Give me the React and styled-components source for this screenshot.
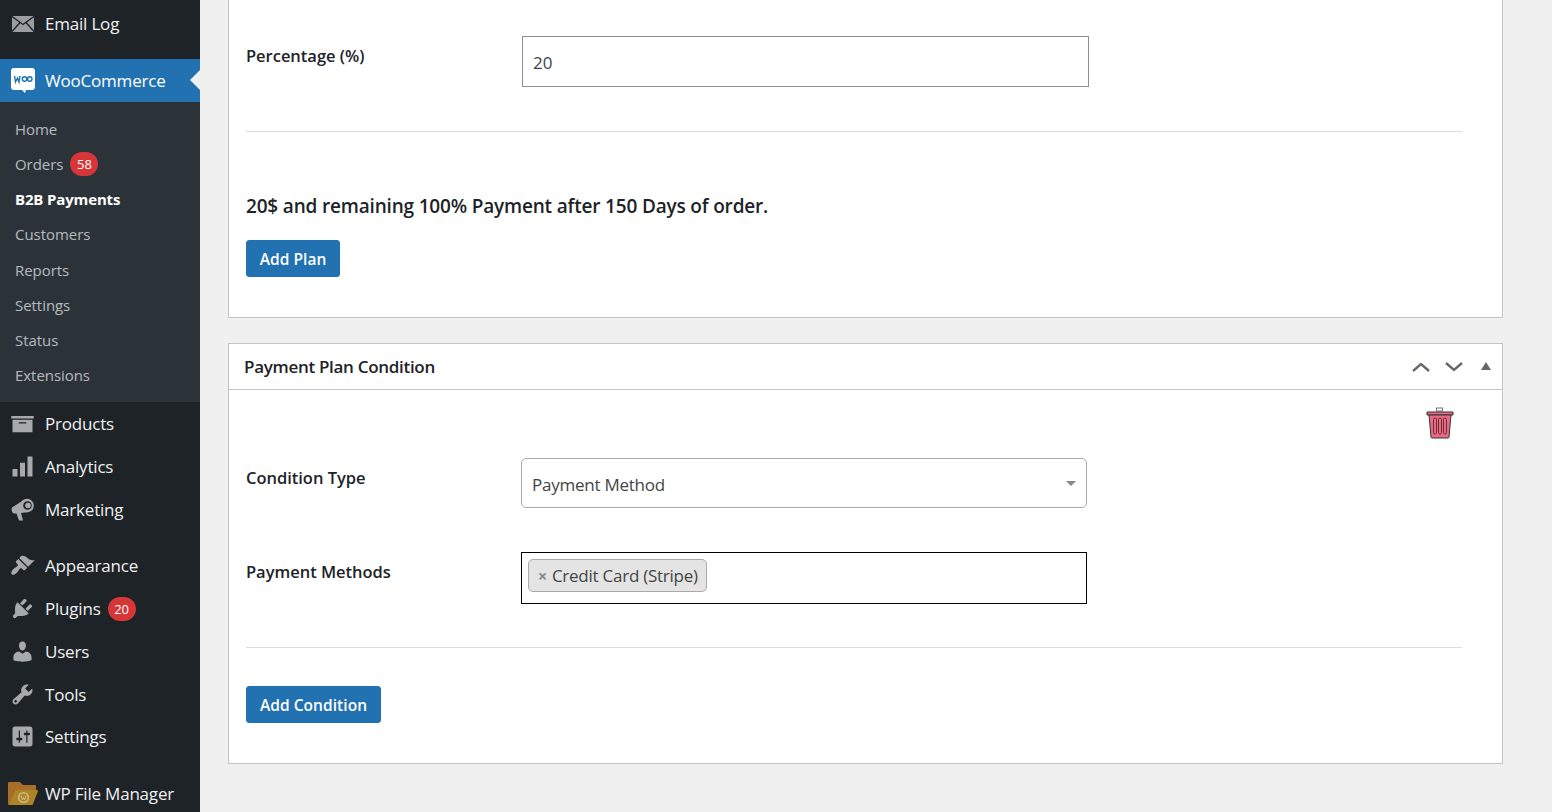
import React from "react";
import styled, { createGlobalStyle } from "styled-components";

const Global = createGlobalStyle`
  html, body { margin: 0; padding: 0; height: 812px; overflow: hidden; background: #f0f0f1; }
  body { font-family: "Open Sans", "Noto Sans", "Liberation Sans", sans-serif; color: #1d2327; }
  * { box-sizing: border-box; }
`;

const Page = styled.div`
  display: flex;
  width: 1552px;
  height: 812px;
  overflow: hidden;
`;

const Sidebar = styled.nav`
  width: 200px;
  flex: none;
  height: 812px;
  background: #1d2327;
  display: flex;
  flex-direction: column;
  padding-top: 2px;
  overflow: hidden;
`;

const MenuRow = styled.div`
  height: ${(p) => p.$h || 43}px;
  flex: none;
  display: flex;
  align-items: center;
  color: #f0f0f1;
  font-size: 17px;
  letter-spacing: -0.2px;
  position: relative;
  margin-top: ${(p) => p.$gap || 0}px;
  background: ${(p) => (p.$active ? "#2271b1" : "transparent")};
  ${(p) => p.$active && "color:#fff;"}
`;

const IconSlot = styled.span`
  width: 45px;
  flex: none;
  display: flex;
  justify-content: center;
  svg { display: block; }
`;

const Notch = styled.span`
  position: absolute;
  right: 0;
  top: 11px;
  width: 0;
  height: 0;
  border: 10px solid transparent;
  border-left: 0;
  border-right-color: #f0f0f1;
`;

const SubMenu = styled.div`
  background: #2c3338;
  height: 300px;
  flex: none;
  padding: 9.2px 0;
`;

const SubItem = styled.div`
  height: 35.2px;
  display: flex;
  align-items: center;
  padding-left: 15px;
  font-size: 15px;
  letter-spacing: -0.05px;
  color: ${(p) => (p.$current ? "#fff" : "rgba(240,246,252,.7)")};
  font-weight: ${(p) => (p.$current ? 700 : 400)};
  ${(p) => p.$current && "letter-spacing: -0.15px;"}
`;

const Count = styled.span`
  display: inline-flex;
  align-items: center;
  justify-content: center;
  min-width: 28px;
  height: 24px;
  padding: 0 6px;
  margin-left: 7px;
  border-radius: 12px;
  background: #d63638;
  color: #fff;
  font-size: 13px;
  letter-spacing: 0;
`;

const Content = styled.main`
  flex: 1;
  padding: 0 49px 0 28px;
  display: flex;
  flex-direction: column;
  gap: 25px;
`;

const Panel = styled.section`
  background: #fff;
  border: 1px solid #c3c4c7;
  ${(p) => p.$cutTop && "border-top: 0;"}
  height: ${(p) => p.$h}px;
  flex: none;
`;

const PanelHead = styled.header`
  height: 46px;
  border-bottom: 1px solid #c3c4c7;
  display: flex;
  align-items: center;
  justify-content: space-between;
  padding: 0 11px 0 15px;
  font-size: 17px;
  font-weight: 600;
  letter-spacing: -0.3px;
`;

const HeadTitle = styled.h2`
  font: inherit;
  margin: 0;
`;

const HeadControls = styled.div`
  display: flex;
  align-items: center;
  gap: 13px;
`;

const Body = styled.div`
  padding: ${(p) => p.$pad || "0"};
  margin-left: 17px;
  width: 1216px;
`;

const FieldRow = styled.div`
  display: flex;
  align-items: flex-start;
  margin-bottom: ${(p) => p.$mb || 0}px;
`;

const Label = styled.label`
  flex: none;
  width: ${(p) => p.$w || 276}px;
  padding-top: 8px;
  font-size: 16.5px;
  line-height: 24px;
  font-weight: 600;
  letter-spacing: -0.02px;
`;

const TextInput = styled.div`
  width: 567px;
  height: 51px;
  border: 1px solid #8c8f94;
  display: flex;
  align-items: center;
  padding: 2px 10px 0;
  font-size: 17px;
  color: #3c434a;
`;

const SelectBox = styled.div`
  width: 566px;
  height: 50px;
  border: 1px solid #aaa;
  border-radius: 5px;
  display: flex;
  align-items: center;
  padding: 2px 10px 0;
  font-size: 17px;
  letter-spacing: -0.25px;
  color: #444;
  position: relative;
`;

const Caret = styled.span`
  position: absolute;
  right: 10px;
  top: 22px;
  width: 0;
  height: 0;
  border: 5px solid transparent;
  border-top: 5px solid #888;
  border-bottom: 0;
`;

const MultiBox = styled.div`
  width: 566px;
  height: 52px;
  border: 1px solid #000;
  display: flex;
  align-items: flex-start;
  padding: 6px;
`;

const Tag = styled.span`
  height: 33px;
  background: #e4e4e4;
  border: 1px solid #aaa;
  border-radius: 5px;
  display: inline-flex;
  align-items: center;
  padding: 0 8px 0 9px;
  font-size: 17px;
  letter-spacing: -0.25px;
  color: #444;
`;

const TagX = styled.span`
  color: #888;
  font-weight: 700;
  font-size: 16px;
  margin-right: 5px;
`;

const Rule = styled.hr`
  border: 0;
  border-top: 1px solid #dcdcde;
  margin: ${(p) => p.$m};
`;

const Sentence = styled.p`
  margin: ${(p) => p.$m};
  font-size: 19px;
  line-height: 26px;
  font-weight: 600;
  letter-spacing: -0.18px;
`;

const Button = styled.button`
  display: block;
  width: ${(p) => p.$w}px;
  height: 37px;
  padding: 0;
  margin-top: ${(p) => p.$mt || 0}px;
  background: #2271b1;
  color: #fff;
  border: 1px solid #2271b1;
  border-radius: 3px;
  font: 600 15.5px "Open Sans", "Noto Sans", sans-serif;
  letter-spacing: 0.05px;
`;

const TrashRow = styled.div`
  display: flex;
  justify-content: flex-end;
  padding: 17px 8px 0 0;
  height: 68px;
`;

const G = "#a7aaad";

const Dash = ({ d }) => (
  <svg width="25" height="25" viewBox="0 0 20 20">
    <path d={d} fill={G} />
  </svg>
);

const Mail = () => (
  <svg width="22" height="16" viewBox="0 0 22 16">
    <rect width="22" height="16" fill="#9a9da1" />
    <path d="M0 .5 11 8.500 22 .5M0 15.500 8 6.500M22 15.500 14 6.500" stroke="#1d2327" strokeWidth="1.400" fill="none" />
  </svg>
);
const Woo = () => (
  <svg width="24" height="25" viewBox="0 0 24 25">
    <path d="M3 0h18a3 3 0 0 1 3 3v16a3 3 0 0 1-3 3h-6l-1 3-3-3H3a3 3 0 0 1-3-3V3a3 3 0 0 1 3-3z" fill="#fff" />
    <path d="M3.500 8l1 6 2-4 1.500 4 1-6" stroke="#2271b1" strokeWidth="1.400" fill="none" />
    <circle cx="13.500" cy="11" r="2.200" stroke="#2271b1" strokeWidth="1.400" fill="none" />
    <circle cx="18.800" cy="11" r="2.200" stroke="#2271b1" strokeWidth="1.400" fill="none" />
  </svg>
);
const Megaphone = () => (
  <svg width="23" height="23" viewBox="0 0 23 23">
    <path d="M1 9.500 12 2.500 18 14l-8 1 2 7.500H8L5.500 15.500H3c-2-.5-3-4.500-2-6z" fill={G} />
    <circle cx="16" cy="7.500" r="6.800" fill={G} />
    <circle cx="16.500" cy="7.500" r="4.300" fill="#1d2327" />
    <circle cx="17" cy="7.500" r="2.800" fill={G} />
  </svg>
);
const Folder = () => (
  <svg width="30" height="23" viewBox="0 0 30 23">
    <path d="M0 1a1 1 0 0 1 1-1h11l3 3h12a1 1 0 0 1 1 1v4H7L2 23H1a1 1 0 0 1-1-1z" fill="#a96e27" />
    <path d="M7 8h22a1 1 0 0 1 1 1l-5 13a1 1 0 0 1-1 1H1z" fill="#ad8527" />
    <circle cx="15.500" cy="15.500" r="4.800" fill="none" stroke="#cdb988" strokeWidth="1.600" />
    <path d="M13 13.500l1.500 4.500 1-3 1 3 1.500-4.500" fill="none" stroke="#cdb988" strokeWidth="1" />
  </svg>
);
const ChevUp = () => (
  <svg width="20" height="12" viewBox="0 0 20 12"><path d="M2 10 10 3l8 7" stroke="#646970" strokeWidth="2.400" fill="none" /></svg>
);
const ChevDown = () => (
  <svg width="20" height="12" viewBox="0 0 20 12"><path d="M2 2l8 7 8-7" stroke="#646970" strokeWidth="2.400" fill="none" /></svg>
);
const TriUp = styled.span`
  width: 0;
  height: 0;
  margin-left: 4px;
  border-left: 5px solid transparent;
  border-right: 5px solid transparent;
  border-bottom: 8px solid #646970;
  margin-top: -1px;
`;
const Trash = () => (
  <svg width="28" height="32" viewBox="0 0 28 32">
    <rect x="10.500" y="1" width="6" height="3" fill="#fff" stroke="#777" />
    <path d="M1 5h26v3H1z" fill="#ea6a84" stroke="#333" strokeWidth="1" />
    <path d="M3 8h22l-2 22a1 1 0 0 1-1 1H6a1 1 0 0 1-1-1z" fill="#ea6a84" stroke="#333" strokeWidth="1" />
    <rect x="7.500" y="11" width="3" height="16" rx="1.500" fill="none" stroke="#6b2c3d" />
    <rect x="12.500" y="11" width="3" height="16" rx="1.500" fill="none" stroke="#6b2c3d" />
    <rect x="17.500" y="11" width="3" height="16" rx="1.500" fill="none" stroke="#6b2c3d" />
  </svg>
);

const ICONS = {
  products: "M19 4v2H1V4h18zM2 7h16v10H2V7zm11 3V9H7v1h6z",
  analytics: "M18 18V2h-4v16h4zm-6 0V7H8v11h4zm-6 0v-6H2v6h4z",
  appearance: "M14.480 11.060L7.410 3.990l1.500-1.500c.5-.56 2.300-.47 3.510.32 1.210.8 1.430 1.280 2.910 2.100 1.180.64 2.450 1.260 4.450.85zm-.71.71L6.700 4.700 4.930 6.470c-.39.39-.39 1.020 0 1.410l1.060 1.060c.39.39.39 1.030 0 1.420-.6.6-1.430 1.110-2.210 1.690-.35.26-.7.53-1.010.84C1.430 14.230.4 16.080 1.400 17.070c.99 1 2.840-.03 4.180-1.360.31-.31.58-.66.85-1.020.57-.78 1.080-1.610 1.690-2.210.39-.39 1.020-.39 1.410 0l1.060 1.060c.39.39 1.020.39 1.410 0z",
  plugins: "M13.110 4.360L9.870 7.600 8 5.730l3.240-3.240c.35-.34 1.050-.2 1.560.32.52.51.66 1.210.31 1.550zm-8 1.770l.91-1.120 9.010 9.010-1.190.84c-.71.71-2.630 1.160-3.820 1.160H6.140L4.900 17.260c-.59.59-1.540.59-2.120 0-.59-.58-.59-1.530 0-2.120l1.240-1.240v-3.880c0-1.130.4-3.190 1.090-3.890zm7.260 3.970l3.240-3.240c.34-.35 1.040-.21 1.550.31.52.51.66 1.210.31 1.550l-3.240 3.250z",
  users: "M10 9.250c-2.270 0-2.730-3.440-2.730-3.440C7 4.020 7.820 2 9.970 2c2.160 0 2.980 2.020 2.710 3.810 0 0-.41 3.440-2.680 3.440zm0 2.570L12.720 10c2.390 0 4.520 2.330 4.520 4.530v2.490s-3.650 1.130-7.240 1.130c-3.650 0-7.240-1.130-7.240-1.130v-2.490c0-2.250 1.940-4.480 4.470-4.480z",
  tools: "M16.680 9.770c-1.340 1.340-3.300 1.670-4.950.99l-5.410 6.520c-.99.99-2.590.99-3.580 0s-.99-2.590 0-3.570l6.520-5.420c-.68-1.650-.35-3.610.99-4.950 1.280-1.280 3.120-1.620 4.720-1.060l-2.890 2.890 2.820 2.820 2.860-2.870c.53 1.580.18 3.390-1.080 4.650zM3.810 16.210c.4.39 1.040.39 1.430 0 .4-.4.4-1.040 0-1.430-.39-.4-1.030-.4-1.430 0-.39.39-.39 1.030 0 1.430z",
  settings: "M18 16V4c0-1.100-.9-2-2-2H4c-1.100 0-2 .9-2 2v12c0 1.100.9 2 2 2h12c1.100 0 2-.9 2-2zM8 11h1c.55 0 1 .45 1 1s-.45 1-1 1H8v1.500c0 .28-.22.5-.5.5s-.5-.22-.5-.5V13H6c-.55 0-1-.45-1-1s.45-1 1-1h1V5.500c0-.28.22-.5.5-.5s.5.22.5.5V11zm5-2h-1c-.55 0-1-.45-1-1s.45-1 1-1h1V5.500c0-.28.22-.5.5-.5s.5.22.5.5V7h1c.55 0 1 .45 1 1s-.45 1-1 1h-1v5.500c0 .28-.22.5-.5.5s-.5-.22-.5-.5V9z",
};

const subs = ["Home", "Orders", "B2B Payments", "Customers", "Reports", "Settings", "Status", "Extensions"];

export default function App() {
  return (
    <Page>
      <Global />
      <Sidebar>
        <MenuRow><IconSlot><Mail /></IconSlot>Email Log</MenuRow>
        <MenuRow $gap={14} $active><IconSlot><Woo /></IconSlot>WooCommerce<Notch /></MenuRow>
        <SubMenu>
          {subs.map((s) => (
            <SubItem key={s} $current={s === "B2B Payments"}>
              {s}
              {s === "Orders" && <Count>58</Count>}
            </SubItem>
          ))}
        </SubMenu>
        <MenuRow><IconSlot><Dash d={ICONS.products} /></IconSlot>Products</MenuRow>
        <MenuRow><IconSlot><Dash d={ICONS.analytics} /></IconSlot>Analytics</MenuRow>
        <MenuRow><IconSlot><Megaphone /></IconSlot>Marketing</MenuRow>
        <MenuRow $gap={13}><IconSlot><Dash d={ICONS.appearance} /></IconSlot>Appearance</MenuRow>
        <MenuRow><IconSlot><Dash d={ICONS.plugins} /></IconSlot>Plugins<Count>20</Count></MenuRow>
        <MenuRow><IconSlot><Dash d={ICONS.users} /></IconSlot>Users</MenuRow>
        <MenuRow $h={42}><IconSlot><Dash d={ICONS.tools} /></IconSlot>Tools</MenuRow>
        <MenuRow><IconSlot><Dash d={ICONS.settings} /></IconSlot>Settings</MenuRow>
        <MenuRow $gap={14}><IconSlot><Folder /></IconSlot>WP File Manager</MenuRow>
      </Sidebar>
      <Content>
        <Panel $cutTop $h={318}>
          <Body $pad="36px 0 0">
            <FieldRow>
              <Label>Percentage (%)</Label>
              <TextInput>20</TextInput>
            </FieldRow>
            <Rule $m="44px 0 0" />
            <Sentence $m="61px 0 0">20$ and remaining 100% Payment after 150 Days of order.</Sentence>
            <Button $w={94} $mt={21}>Add Plan</Button>
          </Body>
        </Panel>
        <Panel $h={421}>
          <PanelHead>
            <HeadTitle>Payment Plan Condition</HeadTitle>
            <HeadControls><ChevUp /><ChevDown /><TriUp /></HeadControls>
          </PanelHead>
          <Body>
            <TrashRow><Trash /></TrashRow>
            <FieldRow $mb={44}>
              <Label $w={275}>Condition Type</Label>
              <SelectBox>Payment Method<Caret /></SelectBox>
            </FieldRow>
            <FieldRow>
              <Label $w={275}>Payment Methods</Label>
              <MultiBox><Tag><TagX>×</TagX>Credit Card (Stripe)</Tag></MultiBox>
            </FieldRow>
            <Rule $m="43px 0 38px" />
            <Button $w={135}>Add Condition</Button>
          </Body>
        </Panel>
      </Content>
    </Page>
  );
}
